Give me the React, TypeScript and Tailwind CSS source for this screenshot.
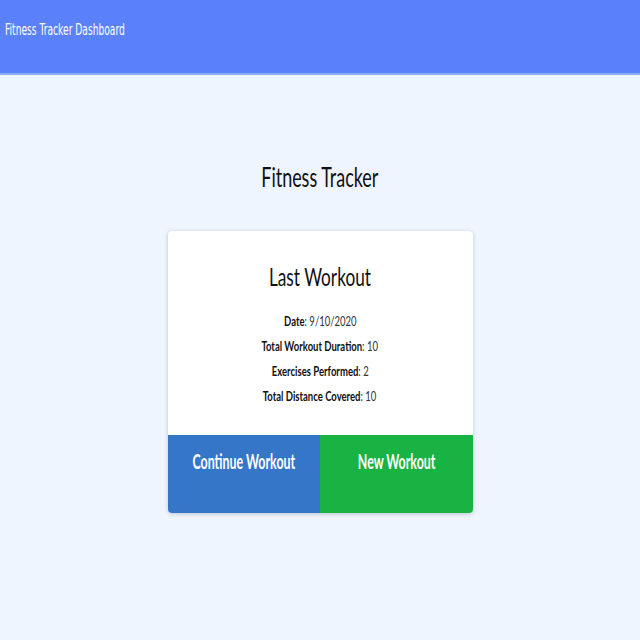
import React from "react";

const Sx = ({ children, className = "" }: { children: React.ReactNode; className?: string }) => (
  <span className={"inline-block whitespace-nowrap " + className}>{children}</span>
);

export default function App() {
  const rows: [string, string][] = [
    ["Date", "9/10/2020"],
    ["Total Workout Duration", "10"],
    ["Exercises Performed", "2"],
    ["Total Distance Covered", "10"],
  ];
  return (
    <div className="min-h-[640px] w-[640px] bg-[#eef5ff] font-['Lato',sans-serif] overflow-hidden">
      <header className="h-[75px] bg-[#5b81fa] border-b-2 border-[#8caafb] pt-[17px] pl-[5px]">
        <Sx className="origin-left scale-x-[0.57] text-white text-[16px] leading-[20px] font-['DejaVu_Sans',sans-serif]">
          Fitness Tracker Dashboard
        </Sx>
      </header>
      <div className="flex flex-col items-center">
        <h1 className="mt-[86px] h-[32px] text-[26px] leading-[32px] text-[#111]">
          <Sx className="scale-x-[0.69]">Fitness Tracker</Sx>
        </h1>
        <div className="mt-[38px] w-[305px] bg-white rounded-[4px] shadow-[0_1px_4px_rgba(0,0,0,0.2)] overflow-hidden flex flex-col">
          <h2 className="pt-[30px] text-center text-[25px] leading-[30px] text-[#111]">
            <Sx className="scale-x-[0.69]">Last Workout</Sx>
          </h2>
          <div className="mt-[17px] flex flex-col items-center text-[14px] leading-[25px] text-[#333]">
            {rows.map(([k, v]) => (
              <Sx key={k} className="scale-x-[0.68]">
                <b className="font-bold text-[#111]">{k}</b>: {v}
              </Sx>
            ))}
          </div>
          <div className="mt-[27px] grid grid-cols-2 h-[78px]">
            <div className="bg-[#3676c8] flex justify-center pt-[14px] text-white font-bold text-[20px] leading-[24px]">
              <Sx className="scale-x-[0.62]">Continue Workout</Sx>
            </div>
            <div className="bg-[#18b343] flex justify-center pt-[14px] text-white font-bold text-[20px] leading-[24px]">
              <Sx className="scale-x-[0.62]">New Workout</Sx>
            </div>
          </div>
        </div>
      </div>
    </div>
  );
}
